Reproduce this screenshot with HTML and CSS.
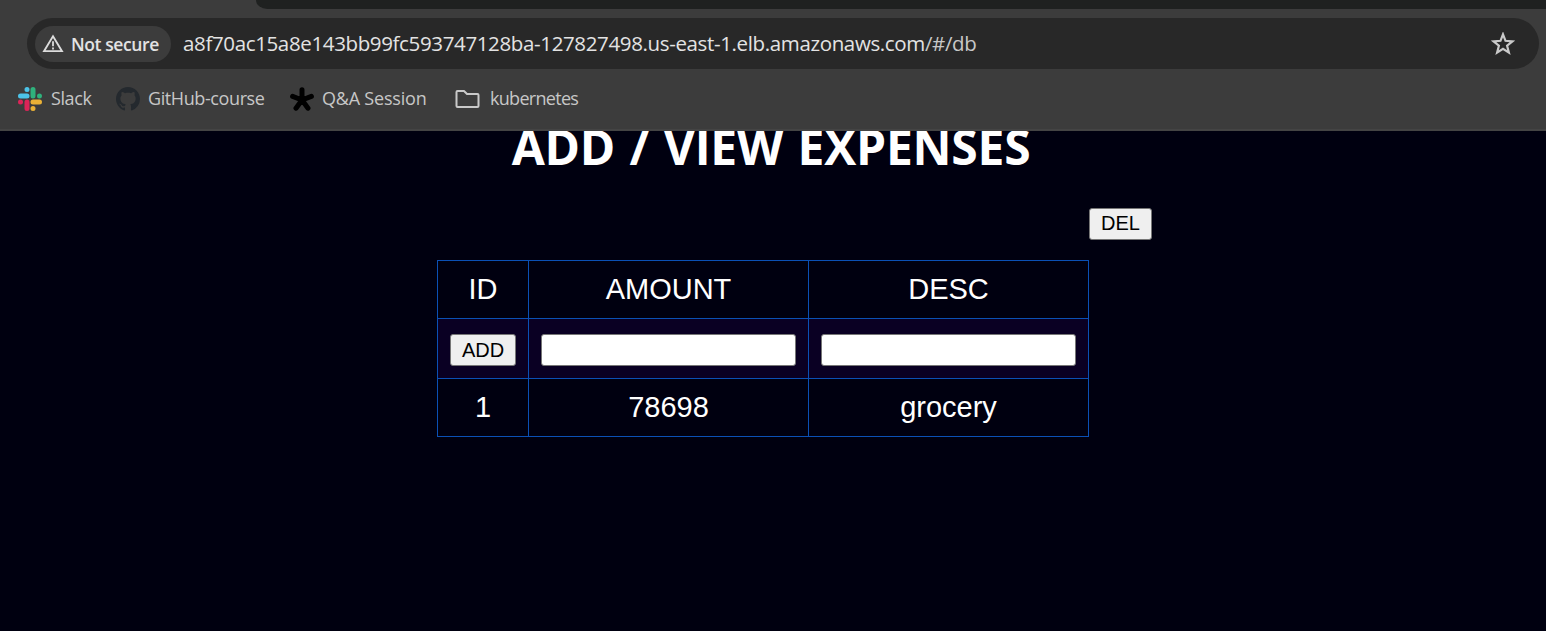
FILE: index.html
```html
<!DOCTYPE html>
<html lang="en">
<head>
<meta charset="utf-8">
<title>Expenses</title>
<link rel="stylesheet" href="styles.css">
</head>
<body>
<header class="browser">
  <div class="tabstrip"><div class="active-tab"></div><div class="tab-rest"></div></div>
  <div class="address-bar">
    <div class="security">
      <svg class="warn" width="22" height="19" viewBox="0 0 22 19" fill="none" stroke="#dcdcdc"><path d="M11 2.2 20 17.2H2Z" stroke-width="1.8"/><path d="M11 7.3v5M11 13.6v2" stroke-width="1.8"/></svg>
      <span class="security-text">Not secure</span>
    </div>
    <div class="url"><span class="host">a8f70ac15a8e143bb99fc593747128ba-127827498.us-east-1.elb.amazonaws.com</span><span class="path">/#/db</span></div>
    <svg class="star" width="24" height="23" viewBox="0 0 24 23"><path d="M12 2.300 14.500 8.800l7 .5-5.400 4.400 1.800 6.900L12 16.900l-5.900 3.700 1.800-6.900L2.500 9.300l7-.5Z" fill="none" stroke="#c9c9c9" stroke-width="2.200"/></svg>
  </div>
  <nav class="bookmarks">
    <a class="bookmark slack"><svg width="24" height="24" viewBox="0 0 24 24" stroke-width="5" stroke-linecap="round"><g stroke="#4cc3e8"><path d="M2.500 9H9M9 2.500h.01"/></g><g stroke="#2fb27c"><path d="M15 2.500V9M21.500 9h.01"/></g><g stroke="#eab136"><path d="M15 15h6.500M15 21.500h.01"/></g><g stroke="#dc2458"><path d="M9 15v6.500M2.500 15h.01"/></g></svg><span class="label">Slack</span></a>
    <a class="bookmark github"><svg width="24" height="24" viewBox="0 0 16 16" fill="#24292e"><path d="M8 0C3.580 0 0 3.580 0 8c0 3.540 2.290 6.530 5.470 7.590.4.070.55-.17.55-.38 0-.19-.01-.82-.01-1.490-2.010.37-2.530-.49-2.690-.94-.09-.23-.48-.94-.82-1.130-.28-.15-.68-.52-.01-.53.63-.01 1.080.58 1.230.82.72 1.210 1.870.87 2.330.66.070-.52.28-.87.51-1.070-1.780-.2-3.640-.89-3.640-3.950 0-.87.31-1.590.82-2.150-.08-.2-.36-1.020.08-2.120 0 0 .67-.21 2.200.82.64-.18 1.320-.27 2-.27s1.360.09 2 .27c1.530-1.040 2.200-.82 2.200-.82.44 1.100.16 1.920.08 2.120.51.56.82 1.270.82 2.150 0 3.070-1.870 3.750-3.650 3.950.29.25.54.73.54 1.480 0 1.070-.01 1.930-.01 2.200 0 .21.15.46.55.38A8 8 0 0 0 16 8c0-4.420-3.580-8-8-8Z"/></svg><span class="label">GitHub-course</span></a>
    <a class="bookmark qa"><svg width="24" height="24" viewBox="0 0 24 24" stroke="#000" stroke-width="5" stroke-linecap="round"><path d="M12 13V2.800M12 13 2.600 9.400M12 13l9.400-3.600M12 13l-6 8.200M12 13l6 8.200"/></svg><span class="label">Q&amp;A Session</span></a>
    <a class="bookmark folder"><svg width="25" height="20" viewBox="0 0 25 20" fill="none" stroke="#c9c9c9" stroke-width="2" stroke-linejoin="round"><path d="M2.500 2h6.500l3 3h10.500q1 0 1 1v11q0 1-1 1h-20q-1 0-1-1V3q0-1 1-1Z"/></svg><span class="label">kubernetes</span></a>
  </nav>
</header>
<main class="page">
  <h1 class="title">ADD / VIEW EXPENSES</h1>
  <div class="expenses">
    <div class="delete-row"><button class="btn del">DEL</button></div>
    <table class="grid">
      <colgroup><col class="c-id"><col class="c-wide"><col class="c-wide"></colgroup>
      <tr><td>ID</td><td>AMOUNT</td><td>DESC</td></tr>
      <tr class="entry"><td><button class="btn add">ADD</button></td><td><input class="field" type="text"></td><td><input class="field" type="text"></td></tr>
      <tr><td>1</td><td>78698</td><td>grocery</td></tr>
    </table>
  </div>
</main>
</body>
</html>
```
FILE: styles.css
```css
* { box-sizing: border-box; }
body { margin: 0; height: 631px; overflow: hidden; background: #000010; color: #fff; font-family: "Liberation Sans", Arial, sans-serif; }
.browser { height: 131px; background: #3c3c3c; border-bottom: 2px solid #444444; font-family: "Open Sans", "Noto Sans", sans-serif; }
.tabstrip { height: 9px; display: flex; background: #3c3c3c; }
.active-tab { width: 256px; }
.tab-rest { flex: 1; background: #1f2120; border-bottom-left-radius: 14px 11px; }
.address-bar { margin: 9px 7px 0 27px; height: 51px; border-radius: 26px; background: #282828; display: flex; align-items: center; padding: 0 24px 0 8px; }
.security { width: 136px; height: 36px; border-radius: 18px; background: #3c3c3c; display: flex; align-items: center; gap: 7px; padding-left: 7px; }
.security-text { font-size: 17.500px; font-weight: 600; color: #e3e3e3; white-space: nowrap; letter-spacing: -0.4px; }
.url { flex: 1; margin-left: 12px; padding-bottom: 2px; font-size: 20.500px; white-space: nowrap; letter-spacing: -0.360px; }
.host { color: #e3e3e3; }
.path { color: #c7c7c7; }
.bookmarks { display: flex; height: 60px; align-items: center; padding-left: 18px; color: #c7c7c7; font-size: 18px; letter-spacing: -0.400px; }
.bookmark { display: flex; align-items: center; gap: 8px; white-space: nowrap; }
.label { padding-bottom: 2px; }
.slack { width: 98px; gap: 9px; }
.github { width: 174px; }
.qa { width: 165px; letter-spacing: -0.200px; }
.folder { gap: 10px; letter-spacing: -0.700px; }
.page { height: 500px; overflow: hidden; }
.title { margin: -19px 0 0; height: 96px; padding-right: 4px; text-align: center; font: bold 48px/69px "Open Sans", "Noto Sans", sans-serif; letter-spacing: -0.250px; word-spacing: 2.300px; }
.expenses { width: 715px; margin-left: 437px; }
.delete-row { display: flex; justify-content: flex-end; height: 52px; }
.btn { height: 32px; padding: 0; border: 1px solid #767676; border-radius: 3px; background: #efefef; color: #000; font: 20px/26px "Liberation Sans", Arial, sans-serif; display: block; }
.del { width: 63px; padding-bottom: 2px; }
.add { width: 66px; margin: 2px auto 0; }
.grid { border-collapse: collapse; table-layout: fixed; width: 652px; font-size: 29px; }
.c-id { width: 91px; }
.c-wide { width: 280px; }
.grid td { border: 1px solid #0b50b5; padding: 0 0 2px; height: 58px; text-align: center; vertical-align: middle; line-height: 34px; }
.grid .entry td { height: 60px; padding: 0; background: #0a0023; }
.field { display: block; width: 255px; height: 32px; margin: 2px auto 0; border: 1px solid #767676; border-radius: 3px; background: #fff; }
```
